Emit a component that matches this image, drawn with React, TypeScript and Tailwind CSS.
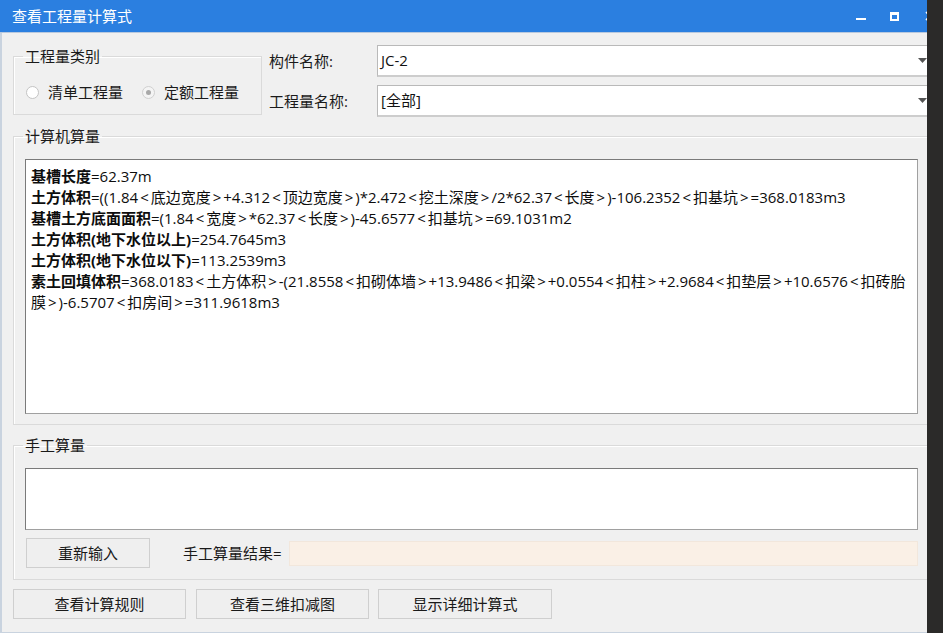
const font = { fontFamily: '"Open Sans", "Noto Sans CJK SC", sans-serif' }

const lines: { label: string; rest: string }[] = [
  { label: '基槽长度', rest: '=62.37m' },
  { label: '土方体积', rest: '=((1.84<底边宽度>+4.312<顶边宽度>)*2.472<挖土深度>/2*62.37<长度>)-106.2352<扣基坑>=368.0183m3' },
  { label: '基槽土方底面面积', rest: '=(1.84<宽度>*62.37<长度>)-45.6577<扣基坑>=69.1031m2' },
  { label: '土方体积(地下水位以上)', rest: '=254.7645m3' },
  { label: '土方体积(地下水位以下)', rest: '=113.2539m3' },
  { label: '素土回填体积', rest: '=368.0183<土方体积>-(21.8558<扣砌体墙>+13.9486<扣梁>+0.0554<扣柱>+2.9684<扣垫层>+10.6576<扣砖胎' },
  { label: '', rest: '膜>)-6.5707<扣房间>=311.9618m3' },
]

// angle brackets get a little room on each side, as in the original
const Formula = ({ text }: { text: string }) => (
  <>
    {text.split(/([<>])/).map((t, i) =>
      t === '<' || t === '>' ? (
        <span key={i} className="px-[2px]">{t}</span>
      ) : (
        <span key={i}>{t}</span>
      )
    )}
  </>
)

const Btn = ({ text, w }: { text: string; w: string }) => (
  <button className={`${w} h-[30px] bg-[#efefef] border border-[#cfcfcf] text-[15px] text-[#1a1a1a]`}>{text}</button>
)

const Combo = ({ value }: { value: string }) => (
  <div className="w-[560px] h-[32px] bg-white border border-[#b9b9b9] border-b-2 border-b-[#cdcdcd] flex items-center pl-[3px] pr-[9px] text-[15px] text-[#111]">
    <span className="flex-1">{value}</span>
    <svg width="9" height="5" viewBox="0 0 9 5">
      <path d="M0 0h9L4.5 5z" fill="#555" />
    </svg>
  </div>
)

export default function App() {
  return (
    <div className="w-[943px] h-[633px] flex bg-[#2b2a29] overflow-hidden" style={font}>
      <div className="w-[927px] h-[633px] flex flex-col overflow-hidden bg-[#f0f0f0] border-b border-[#c9d3df]">
        {/* title bar */}
        <div className="h-[33px] shrink-0 bg-[#2b7fe0] flex items-center pl-[12px] text-white text-[15px] border-b border-[#b9c9de]">
          <span className="flex-1">查看工程量计算式</span>
          <span className="w-[10px] h-[2px] bg-white mr-[24px] mt-[6px]" />
          <span className="w-[9px] h-[9px] border-2 border-white border-t-[3px] mr-[26px]" />
          <svg width="10" height="10" viewBox="0 0 10 10" className="mr-[-8px]">
            <path d="M1 1l8 8M9 1L1 9" stroke="#fff" strokeWidth="1.6" />
          </svg>
        </div>

        <div className="flex-1 w-[950px] border-l-2 border-[#c9d3df] pl-[11px] flex flex-col">
          {/* top row */}
          <div className="flex mt-[12px] h-[79px]">
            <fieldset className="w-[249px] h-[67px] mt-[3px] border border-[#dadada] shadow-[inset_1px_1px_0_#fff]">
              <legend className="ml-[9px] px-[2px] text-[15px] text-[#1a1a1a] leading-[16px]">工程量类别</legend>
              <div className="flex items-center mt-[17px] ml-[12px] text-[15px] text-[#1a1a1a]">
                <span className="w-[13px] h-[13px] rounded-full border border-[#c4c4c4] bg-white" />
                <span className="ml-[9px]">清单工程量</span>
                <span className="ml-[19px] w-[13px] h-[13px] rounded-full border border-[#d0d0d0] bg-[#f4f4f4] flex items-center justify-center">
                  <span className="w-[5px] h-[5px] rounded-full bg-[#a8a8a8]" />
                </span>
                <span className="ml-[9px]">定额工程量</span>
              </div>
            </fieldset>
            <div className="flex-1 flex flex-col gap-[8px] ml-[7px]">
              <div className="flex items-center">
                <span className="w-[108px] text-[15px] text-[#1a1a1a]">构件名称:</span>
                <Combo value="JC-2" />
              </div>
              <div className="flex items-center">
                <span className="w-[108px] text-[15px] text-[#1a1a1a]">工程量名称:</span>
                <Combo value="[全部]" />
              </div>
            </div>
          </div>

          {/* computer calc */}
          <fieldset className="mt-[4px] w-[922px] h-[297px] border border-[#dadada] shadow-[inset_1px_1px_0_#fff]">
            <legend className="ml-[9px] px-[2px] text-[15px] text-[#1a1a1a] leading-[16px]">计算机算量</legend>
            <div className="ml-[11px] mt-[15px] w-[893px] h-[255px] overflow-hidden bg-white border border-[#7a7a7a] border-r-[#a0a0a0] border-b-[#a0a0a0] pl-[5px] pt-[6px] text-[15px] leading-[21px] text-[#0d0d0d] whitespace-nowrap">
              {lines.map((l, i) => (
                <div key={i}>
                  {l.label && <b className="font-bold">{l.label}</b>}
                  <Formula text={l.rest} />
                </div>
              ))}
            </div>
          </fieldset>

          {/* manual calc */}
          <fieldset className="mt-[12px] w-[922px] h-[143px] border border-[#dadada] shadow-[inset_1px_1px_0_#fff]">
            <legend className="ml-[9px] px-[2px] text-[15px] text-[#1a1a1a] leading-[16px]">手工算量</legend>
            <div className="ml-[11px] mt-[15px] w-[893px] h-[62px] bg-white border border-[#7a7a7a] border-r-[#a0a0a0] border-b-[#a0a0a0]" />
            <div className="ml-[11px] w-[893px] flex items-center mt-[8px]">
              <Btn text="重新输入" w="w-[124px] ml-[1px]" />
              <span className="ml-[33px] text-[15px] text-[#1a1a1a]">手工算量结果=</span>
              <div className="ml-[7px] flex-1 h-[25px] bg-[#faf0e6] border border-[#f2e7dc]" />
            </div>
          </fieldset>

          {/* bottom buttons */}
          <div className="flex mt-[9px] gap-[10px]">
            <Btn text="查看计算规则" w="w-[173px]" />
            <Btn text="查看三维扣减图" w="w-[173px]" />
            <Btn text="显示详细计算式" w="w-[174px] ml-[-1px]" />
          </div>
        </div>
      </div>
    </div>
  )
}
